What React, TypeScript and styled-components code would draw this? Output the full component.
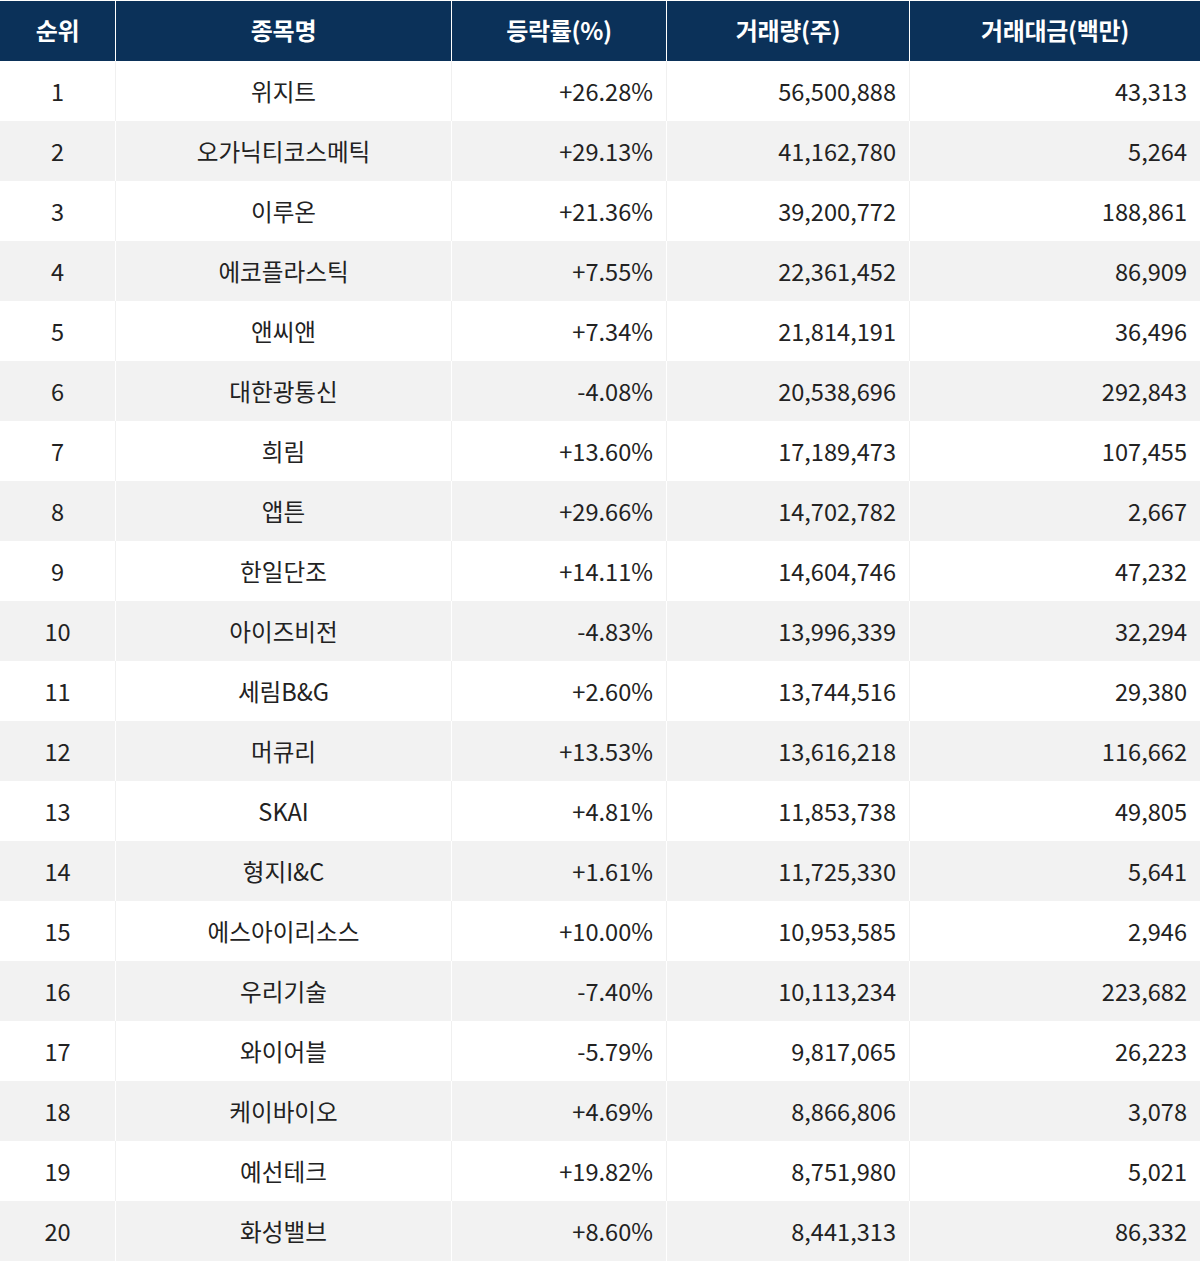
import React from "react";
import styled, { createGlobalStyle } from "styled-components";

const Global = createGlobalStyle`
  html, body { margin: 0; padding: 0; background: #ffffff; }
  body { font-family: "Noto Sans CJK KR", "Noto Sans", sans-serif; }
`;

const Table = styled.div`
  width: 1200px;
  padding-top: 1px;
  display: flex;
  flex-direction: column;
`;

const Row = styled.div<{ $variant: "head" | "odd" | "even" }>`
  display: grid;
  grid-template-columns: 115px 336px 215px 243px 291px;
  height: 60px;
  background: ${(p) =>
    p.$variant === "head" ? "#0b3159" : p.$variant === "even" ? "#f2f2f2" : "#ffffff"};
  color: ${(p) => (p.$variant === "head" ? "#ffffff" : "#222222")};
  font-weight: ${(p) => (p.$variant === "head" ? 700 : 400)};
  --line: ${(p) => (p.$variant === "odd" ? "#f0f0f0" : "#ffffff")};
`;

const Cell = styled.div<{ $align: "center" | "right"; $first?: boolean }>`
  display: flex;
  align-items: center;
  justify-content: ${(p) => (p.$align === "center" ? "center" : "flex-end")};
  padding-right: ${(p) => (p.$align === "right" ? "13px" : "0")};
  padding-bottom: 1px;
  border-left: ${(p) => (p.$first ? "none" : "1px solid var(--line)")};
  font-size: 23.6px;
  white-space: nowrap;
`;

const HeadCell = styled(Cell)`
  padding-right: 0;
  padding-bottom: 3px;
  justify-content: center;
  font-size: 24px;
  letter-spacing: -0.3px;
`;

const data: [string, string, string, string][] = [
  ["위지트", "+26.28%", "56,500,888", "43,313"],
  ["오가닉티코스메틱", "+29.13%", "41,162,780", "5,264"],
  ["이루온", "+21.36%", "39,200,772", "188,861"],
  ["에코플라스틱", "+7.55%", "22,361,452", "86,909"],
  ["앤씨앤", "+7.34%", "21,814,191", "36,496"],
  ["대한광통신", "-4.08%", "20,538,696", "292,843"],
  ["희림", "+13.60%", "17,189,473", "107,455"],
  ["앱튼", "+29.66%", "14,702,782", "2,667"],
  ["한일단조", "+14.11%", "14,604,746", "47,232"],
  ["아이즈비전", "-4.83%", "13,996,339", "32,294"],
  ["세림B&G", "+2.60%", "13,744,516", "29,380"],
  ["머큐리", "+13.53%", "13,616,218", "116,662"],
  ["SKAI", "+4.81%", "11,853,738", "49,805"],
  ["형지I&C", "+1.61%", "11,725,330", "5,641"],
  ["에스아이리소스", "+10.00%", "10,953,585", "2,946"],
  ["우리기술", "-7.40%", "10,113,234", "223,682"],
  ["와이어블", "-5.79%", "9,817,065", "26,223"],
  ["케이바이오", "+4.69%", "8,866,806", "3,078"],
  ["예선테크", "+19.82%", "8,751,980", "5,021"],
  ["화성밸브", "+8.60%", "8,441,313", "86,332"],
];

export default function App() {
  return (
    <>
      <Global />
      <Table>
        <Row $variant="head">
          <HeadCell $align="center" $first>순위</HeadCell>
          <HeadCell $align="center">종목명</HeadCell>
          <HeadCell $align="center">등락률(%)</HeadCell>
          <HeadCell $align="center">거래량(주)</HeadCell>
          <HeadCell $align="center">거래대금(백만)</HeadCell>
        </Row>
        {data.map((d, i) => (
          <Row key={i} $variant={i % 2 === 0 ? "odd" : "even"}>
            <Cell $align="center" $first>{i + 1}</Cell>
            <Cell $align="center">{d[0]}</Cell>
            <Cell $align="right">{d[1]}</Cell>
            <Cell $align="right">{d[2]}</Cell>
            <Cell $align="right">{d[3]}</Cell>
          </Row>
        ))}
      </Table>
    </>
  );
}
